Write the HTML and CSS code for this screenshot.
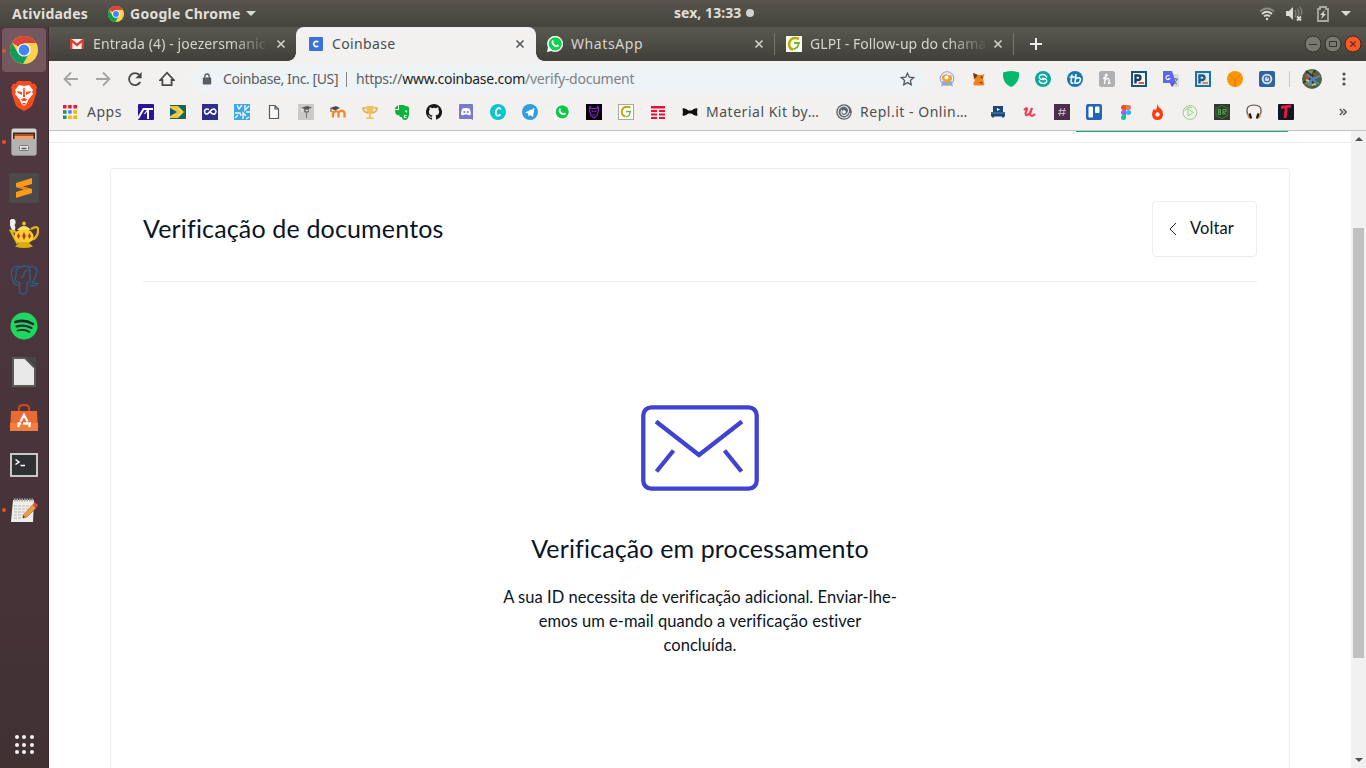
FILE: index.html
```html
<!DOCTYPE html>
<html lang="pt">
<head>
<meta charset="utf-8">
<title>Coinbase</title>
<link rel="stylesheet" href="styles.css">
</head>
<body>
<div class="topbar">
  <div class="tb-left"><span class="t-ativ">Atividades</span>
    <svg class="tb-chrome" width="16" height="16" viewBox="0 0 28 28"><circle cx="14" cy="14" r="14" fill="#fdd04f"/><path d="M14 14 2 6.8A14 14 0 0 1 26.2 7H14z" fill="#dc4437"/><path d="M2 6.8A14 14 0 0 0 13 28l6-10.5L8 17z" fill="#109d58"/><circle cx="14" cy="14" r="6.6" fill="#fff"/><circle cx="14" cy="14" r="5.2" fill="#4285f4"/></svg>
    <span class="t-chrome">Google Chrome</span><i class="caret"></i></div>
  <div class="tb-clock"><span class="t-clock">sex, 13:33</span><i class="dot"></i></div>
  <div class="tb-right">
    <svg width="16" height="16" viewBox="0 0 16 16" fill="none" stroke="#dcdad5" stroke-width="1.8"><path d="M1 5.5Q8-.5 15 5.5" stroke="#8b8984"/><path d="M3 8Q8 3.6 13 8M5 10.4Q8 8 11 10.4"/><circle cx="8" cy="13" r="1.2" fill="#dcdad5" stroke="none"/></svg>
    <svg width="18" height="16" viewBox="0 0 18 16" fill="none"><path d="M1 5h3l4-4v13l-4-4H1z" fill="#dcdad5"/><path d="M10 4q2 3.500 0 7M12.500 2.500q3 5 0 9M15 1q3 5 1 8" stroke="#85837d" stroke-width="1.300"/><path d="m12 10.500 4 4m0-4-4 4" stroke="#dcdad5" stroke-width="1.800"/></svg>
    <svg width="14" height="16" viewBox="0 0 14 16"><path d="M2 3h2V1h6v2h2v12H2z" fill="none" stroke="#aaa8a2" stroke-width="1.800"/><path d="M9 4 4 9h2.500L5 13l5-5H7.500z" fill="#dcdad5"/></svg>
    <i class="caret"></i>
  </div>
</div>
<div class="desktop">
  <div class="dock">
    <div class="app on run"><svg width="28" height="28" viewBox="0 0 28 28"><circle cx="14" cy="14" r="14" fill="#fdd04f"/><path d="M14 14 2 6.800A14 14 0 0 1 26.200 7H14z" fill="#dc4437"/><path d="M2 6.800A14 14 0 0 0 13 28l6-10.500L8 17z" fill="#109d58"/><circle cx="14" cy="14" r="6.600" fill="#fff"/><circle cx="14" cy="14" r="5.400" fill="#4285f4"/></svg></div>
    <div class="app"><svg width="26" height="30" viewBox="0 0 26 30"><path d="M7 0h12l3 3 2-.5 2 4-1 3 .5 2-4 12q-1 3-8.500 6.500Q5.500 26.500 4.500 23.500L.5 11.500l.5-2-1-3 2-4L4 3z" fill="#fb4a1c"/><path d="m8 4 5 1 5-1 4 5-1 2 1 2-5 6-1 3-3 3-3-3-1-3-5-6 1-2-1-2z" fill="#fff"/><path d="m6 10 5 1v3l-4-2zm14 0-5 1v3l4-2zM10 18l3-1 3 1-1 2h-4zM11 22h4l-2 2z" fill="#fb4a1c"/><path d="M12.300 7h1.400l.3 9h-2z" fill="#fb4a1c"/></svg></div>
    <div class="app run"><svg width="26" height="28" viewBox="0 0 26 28"><rect x=".5" y=".5" width="25" height="27" rx="2" fill="#d4d4d4"/><rect x="2" y="4.500" width="22" height="7" fill="#3a2a22"/><path d="M3.500 6h19v2h-19z" fill="#b54e23"/><path d="M3.500 8h19v3h-19z" fill="#f0a163"/><rect x="1" y="11" width="24" height="16" rx="1" fill="#b2b2b2"/><rect x="8.500" y="17.500" width="9" height="5" rx="1" fill="#e8e8e8" stroke="#777"/><path d="M10.500 20.500h5" stroke="#555" stroke-width="1.500"/></svg></div>
    <div class="app"><svg width="30" height="30" viewBox="0 0 30 30"><rect width="30" height="30" rx="2" fill="#4a4a4a"/><path d="m7 10 16-5v6l-9 2.500 9 2.500v4L7 25v-6l8-2.500L7 14z" fill="#fd9a18"/><path d="m7 14 9 3 5-1.500-8-2z" fill="#e58410"/></svg></div>
    <div class="app"><svg width="30" height="30" viewBox="0 0 30 30"><path d="M1 1q4-3 5.500 1 .5 3-1 4 2 3-.5 6-3-1-4-6z" fill="#eee"/><path d="m2 12 4 .5 5 8-3 3zM22 10q8-5 7 3-1 7-8 8" fill="none" stroke="#e5b515" stroke-width="2.300"/><ellipse cx="15" cy="17.500" rx="9.500" ry="7.500" fill="#f3d132"/><path d="M8 11q7-8 14 0z" fill="#f8df66"/><circle cx="15" cy="4.500" r="2" fill="#e7b820"/><path d="M11 23h8l5 4.500q-9 3-18 0z" fill="#dfa90f"/><path d="m9.500 14 1.500 3-1.500 3L8 17zm5.500-1 1.800 4-1.800 4-1.800-4zm5.500 1 1.500 3-1.500 3-1.500-3z" fill="#cc2b1c"/></svg></div>
    <div class="app"><svg width="30" height="30" viewBox="0 0 30 30" fill="none" stroke="#2c5f8c" stroke-width="1.300"><path d="M9 20q-3 2-5.500-6T4 3q4-3 8-1M12 2q8-3 9 3v10q1 2-3 3v7q-.5 4-4 4t-3.500-4v-7l-3-1.500q-2-2-.5-6V6q.5-3 5-4M19 2q9-2 9 5-1 6-5 11l6 .5q-2 3-8 2M15 9q1-5 5-3M12 13q4-2 3-6M9 17l3 1"/></svg></div>
    <div class="app"><svg width="28" height="28" viewBox="0 0 28 28"><circle cx="14" cy="14" r="13.500" fill="#1ed760"/><g fill="none" stroke="#25272b" stroke-linecap="round"><path d="M5.500 10q9-3 17.500 2" stroke-width="2.600"/><path d="M6.500 14.500q8-2.500 15 1.500" stroke-width="2.200"/><path d="M7.500 18.500q7-1.800 12 1.500" stroke-width="1.800"/></g></svg></div>
    <div class="app"><svg width="24" height="30" viewBox="0 0 24 30"><path d="M1 1h12l10 10v18H1z" fill="#e9e9e9" stroke="#5a5a58" stroke-width="2"/><path d="M13 0h11v11z" fill="#454746"/></svg></div>
    <div class="app"><svg width="28" height="30" viewBox="0 0 28 30"><path d="M9 10V5q0-3 5-3t5 3v5" fill="none" stroke="#cf471d" stroke-width="2"/><path d="M1 8h26l1 20H0z" fill="#eb6a32"/><path d="M0 20h28v8H0z" fill="#f27d3c"/><path d="m10.500 18.500 3.500-6.500 3.500 6.500M7.500 20.500h3.500m2 0h8M9 22l-1 2m11-2 1 2" fill="none" stroke="#fff" stroke-width="2.300"/></svg></div>
    <div class="app"><svg class="term" width="28" height="24" viewBox="0 0 28 24"><rect x="1" y="1" width="26" height="22" fill="#2e3131" stroke="#c6c8c7" stroke-width="2"/><path d="m5.500 6.500 3.500 2.500-3.500 2.500M10.500 12.500h4.500" fill="none" stroke="#fff" stroke-width="1.500"/></svg></div>
    <div class="app run"><svg width="28" height="26" viewBox="0 0 28 26"><path d="M3 3h21l-1 22H1z" fill="#eeeeea"/><path d="M4 3h20" stroke="#aaa" stroke-width="3" stroke-dasharray="1.500 1"/><path d="M4 9h17M4 12h16M4 15h12M4 18h10M4 21h8" stroke="#b5b5b2" stroke-dasharray="3 1"/><path d="m13.500 18 9-10 3.500 3-9 9-4 1z" fill="#f09e3d" stroke="#9c5f1f" stroke-width=".6"/><path d="m22.500 8 2-3 3.500 3-2 3z" fill="#e94a4d"/><path d="m12.500 21 1-2.500 1.500 1.500z" fill="#333"/></svg></div>
    <div class="apps-grid"><i></i><i></i><i></i><i></i><i></i><i></i><i></i><i></i><i></i></div>
  </div>
  <div class="window">
    <div class="tabs">
      <div class="tab"><svg class="fav" width="16" height="16" viewBox="0 0 16 16"><path d="M1 3h14v10H1z" fill="#f3f1ee"/><path d="M2.200 13V4.200L8 9l5.800-4.800V13" fill="none" stroke="#df3b32" stroke-width="2.400"/></svg><span class="title fade t1">Entrada (4) - joezersmanic</span><svg class="x" width="10" height="10" viewBox="0 0 10 10"><path d="m1.500 1.500 7 7m0-7-7 7"/></svg></div>
      <div class="tab active"><svg class="fav" width="16" height="16" viewBox="0 0 16 16"><rect x="1" y="1" width="14" height="14" rx="1" fill="#3b72d9"/><path d="M10.300 6.300a2.600 2.600 0 1 0 0 3.400" fill="none" stroke="#fff" stroke-width="1.700"/></svg><span class="title t2">Coinbase</span><svg class="x" width="10" height="10" viewBox="0 0 10 10"><path d="m1.500 1.500 7 7m0-7-7 7"/></svg></div>
      <div class="tab after"><svg class="fav" width="16" height="16" viewBox="0 0 16 16"><path d="m0 16 1-4.500A8 8 0 1 1 4.500 15z" fill="#fff"/><circle cx="8.200" cy="7.800" r="6.600" fill="#0bd14c"/><path d="M5 4.500q1-1 1.800.8l-.4 1.400q1 2 3 2.800l1.200-1q2 .6 1 2-3 2-6-1.600-1.800-2.300-.6-4.400" fill="#fff"/></svg><span class="title t3">WhatsApp</span><svg class="x" width="10" height="10" viewBox="0 0 10 10"><path d="m1.500 1.500 7 7m0-7-7 7"/></svg></div>
      <div class="tab sep"><svg class="fav" width="16" height="16" viewBox="0 0 16 16"><rect width="16" height="16" fill="#fafaf2"/><path d="M13 3Q6 0 3.500 6 2 12.500 7 13.500" fill="none" stroke="#b5ae0b" stroke-width="2.600"/><path d="M8 7h5l-1.500 4-4 2.500" fill="none" stroke="#76b238" stroke-width="1.800"/></svg><span class="title fade t4">GLPI - Follow-up do chama</span><svg class="x" width="10" height="10" viewBox="0 0 10 10"><path d="m1.500 1.500 7 7m0-7-7 7"/></svg></div>
      <div class="newtab"><svg width="12" height="12" viewBox="0 0 12 12"><path d="M6 0v12M0 6h12" stroke="#eeece8" stroke-width="2"/></svg></div>
      <div class="wbtns">
        <svg width="18" height="18" viewBox="0 0 18 18"><circle cx="9" cy="9" r="8" fill="#797871" stroke="#33322d"/><path d="M5 9.500h8" stroke="#33322d"/></svg>
        <svg width="18" height="18" viewBox="0 0 18 18"><circle cx="9" cy="9" r="8" fill="#797871" stroke="#33322d"/><path d="M5.500 6.500h7v5h-7z" fill="none" stroke="#33322d"/></svg>
        <svg width="18" height="18" viewBox="0 0 18 18"><circle cx="9" cy="9" r="8" fill="#f35a26" stroke="#4a2416"/><path d="m6.300 6.300 5.400 5.400m0-5.400-5.400 5.400" stroke="#5c2813" stroke-width="1.200"/></svg>
      </div>
    </div>
    <div class="toolbar">
      <div class="nav">
        <svg width="16" height="16" viewBox="0 0 16 16" stroke="#a5a4a3"><path d="M15 8H2m6-6.500L1.500 8 8 14.500"/></svg>
        <svg width="16" height="16" viewBox="0 0 16 16" stroke="#a5a4a3"><path d="M1 8h13M8 1.500 14.500 8 8 14.500"/></svg>
        <svg width="16" height="16" viewBox="0 0 16 16" stroke="#494949"><path d="M13.300 11A6 6 0 1 1 12.500 4"/><path d="M14.600 1v6.200H8.400z" fill="#494949" stroke="none"/></svg>
        <svg width="16" height="16" viewBox="0 0 16 16" stroke="#494949"><path d="M1.200 9 8 1.700 14.800 9H12.600v5.200H3.400V9z"/></svg>
      </div>
      <div class="omnibox">
        <svg width="10" height="12" viewBox="0 0 10 12"><rect x=".8" y="4.500" width="8.400" height="7" rx=".8" fill="#5a5d61"/><path d="M2.800 5V3.200a2.200 2.200 0 0 1 4.400 0V5" fill="none" stroke="#5a5d61" stroke-width="1.300"/></svg>
        <span class="cert">Coinbase, Inc. [US]</span><i class="bar"></i><span class="url"><span class="sch">https://</span><b>www.coinbase.com</b>/verify-document</span>
        <svg class="star" width="15" height="14" viewBox="0 0 15 14"><path d="m7.500 1.200 1.800 4 4.300.4-3.200 2.900.9 4.300-3.800-2.200-3.800 2.200.9-4.300L1.400 5.600l4.300-.4z" fill="none" stroke="#55585c" stroke-width="1.300"/></svg>
      </div>
      <div class="exts">
        <svg width="16" height="16" viewBox="0 0 16 16"><circle cx="8" cy="7.500" r="6.800" fill="#e8ecf5" stroke="#86a0d2"/><path d="m3.500 10-1.500 5.500 4-1.500h4l4 1.500-1.500-5.500" fill="#91a8d8"/><path d="m3 5 4-2 2 1.500L12.500 4l.5 4.500-3 3H6L3 8z" fill="#e9a238"/><circle cx="7.500" cy="6.500" r="2" fill="#fff"/></svg>
        <svg width="16" height="16" viewBox="0 0 16 16"><path d="m2.500 2 4 2h4l3-1-1.500 5 1.500 5-1 1.500H3.500L2 13l2-4-1.500-2z" fill="#f0831f"/><path d="m2 2 5 2-3.500 4zm7 4 2-1 1 3zM8 11h3v2z" fill="#6e3518"/></svg>
        <svg width="16" height="16" viewBox="0 0 16 16"><path d="M0 1.500q8-3 16 0Q17 12 8 16-1 12 0 1.500" fill="#04b96c"/></svg>
        <svg width="16" height="16" viewBox="0 0 16 16"><circle cx="8" cy="8" r="8" fill="#07a99f"/><path d="M12 6.500Q10.500 3 7 3.500 3.500 4.500 4.500 7 5.500 9 9 8.500M4 9.500q1.500 3.500 5 3 3.500-1 2.500-3.500Q10.500 7 7 7.500" fill="none" stroke="#fff" stroke-width="1.500"/></svg>
        <svg width="16" height="16" viewBox="0 0 16 16"><circle cx="8" cy="8" r="8" fill="#1678b5"/><path d="M5 3.500 4 11q0 1.500 2.500 1M2.500 6H8M9 3 8 12q5 1 5.500-3.500Q13 5.500 9 7.500" fill="none" stroke="#fff" stroke-width="1.600"/></svg>
        <svg width="16" height="16" viewBox="0 0 16 16"><rect width="16" height="16" rx="2.500" fill="#aeb0b2"/><path d="M5.500 13 6.500 4q2-2 1.500.5-1 2.500-4 3M6.200 9q4-3.500 4 .2l-.5 3.300 2-.8" fill="none" stroke="#fff" stroke-width="1.300"/></svg>
        <svg width="16" height="16" viewBox="0 0 16 16"><rect x="1" y="1" width="14" height="14" fill="#fff" stroke="#18557f" stroke-width="2"/><path d="M4.500 12.500V4.500H7q2.500 0 2.500 2.200T7 9H5" fill="none" stroke="#143e63" stroke-width="2.400"/><path d="M7.500 12H13" stroke="#ef4023" stroke-width="1.800"/></svg>
        <svg width="16" height="16" viewBox="0 0 16 16"><path d="M5 3h11v13H8z" fill="#d9dbdc"/><path d="M0 0h9l4 12H0z" fill="#5b68ec"/><path d="M7 12h5l-3 4z" fill="#7144c8"/><path d="M6.500 5.200a2 2 0 1 0 .2 2.500H5" fill="none" stroke="#fff" stroke-width="1.100"/><path d="M10 8h5m-2.500-1v1m1.500 0q-1 4-4 5m0-4q1 3 4 4" fill="none" stroke="#607c86"/></svg>
        <svg width="16" height="16" viewBox="0 0 16 16"><rect x="1" y="1" width="14" height="14" fill="#dceaf2" stroke="#2171a2" stroke-width="2"/><path d="M4.500 12.500V4.500H7q2.500 0 2.500 2.200T7 9H5" fill="none" stroke="#235a87" stroke-width="2.400"/><path d="M7.500 12H13" stroke="#ed7043" stroke-width="1.800"/></svg>
        <svg width="16" height="16" viewBox="0 0 16 16"><circle cx="8" cy="8" r="8" fill="#ff9600"/><path d="m2.500 3.500 5.500 6 5.500-6M8 9.500V16" fill="none" stroke="#d57905"/></svg>
        <svg width="16" height="16" viewBox="0 0 16 16"><rect width="16" height="16" rx="2" fill="#31629f"/><circle cx="8" cy="8" r="5.300" fill="#d7e4f2"/><circle cx="8" cy="8" r="2.800" fill="none" stroke="#3768a5" stroke-width="1.200"/><path d="m8 8 2-3" stroke="#3768a5"/></svg>
      </div>
      <i class="tsep"></i>
      <svg class="avatar" width="20" height="20" viewBox="0 0 20 20"><circle cx="10" cy="10" r="10" fill="#55643f"/><path d="m4 2 6 5 3-6M1 14l8-5 3 9" fill="#7c8a5c" stroke="#293924" stroke-width="2"/><path d="m5 5 6 5 7-3M10 10l-3 7m4-6 6 4" fill="none" stroke="#4f86c4" stroke-width="2"/><path d="m3 6 4 4m4-6 3 2" stroke="#c04632" stroke-width="2"/><path d="m10 16 4-1m-10-4 3 1" stroke="#b8c1a3" stroke-width="2"/></svg>
      <svg class="kebab" width="4" height="14" viewBox="0 0 4 14" fill="#505050"><circle cx="2" cy="2" r="1.600"/><circle cx="2" cy="7" r="1.600"/><circle cx="2" cy="12" r="1.600"/></svg>
    </div>
    <div class="bookmarks">
      <div class="bm apps"><svg width="14" height="14" viewBox="0 0 14 14"><path d="M0 0h3.500v3.500H0zM5.200 0h3.500v3.500H5.200zM10.400 0H14v3.500h-3.600z" fill="#f11534"/><path d="M0 5.200h3.500v3.500H0zM0 10.400h3.500V14H0z" fill="#0d9c5a"/><path d="M5.200 5.200h3.500v3.500H5.200z" fill="#4285f4"/><path d="M10.400 5.200H14v3.500h-3.600zM5.200 10.400h3.500V14H5.200zM10.400 10.400H14V14h-3.600z" fill="#f4b400"/></svg><span>Apps</span></div>
      <div class="bm"><svg width="16" height="16" viewBox="0 0 16 16"><rect width="16" height="16" rx="1" fill="#2d139a"/><path d="M0 14.500 5.500 5H15M10 4v11" fill="none" stroke="#fff" stroke-width="2"/><path d="m6.500 10 3-4" stroke="#fff" stroke-width="1.200"/></svg></div>
      <div class="bm"><svg width="16" height="16" viewBox="0 0 16 16"><path d="M0 1h16v14H0z" fill="#16694d"/><path d="M0 2h8l6 6-6 6H0z" fill="#eac641"/><path d="m0 4 7 4-7 4z" fill="#11537b"/><path d="m8 4 4.500 4L8 12" fill="none" stroke="#f7e5a0"/></svg></div>
      <div class="bm"><svg width="16" height="16" viewBox="0 0 16 16"><rect width="16" height="16" fill="#302e8b"/><path d="M7 5.500Q3 4 2.500 7.500 3 11 6 9.500l4-4q3-1.500 4 2-.5 4-4 2L7.500 7.500" fill="none" stroke="#fff" stroke-width="1.600"/></svg></div>
      <div class="bm"><svg width="16" height="16" viewBox="0 0 16 16"><rect width="16" height="16" fill="#39a8e3"/><path d="m3 1 2 4 3-4M11 1v5l4-4M1 9h5l1 3M1 14l3-3m5 4V9l3 3m0-4h4m-4 7 3-2" fill="none" stroke="#f2fafd" stroke-width="1.400"/></svg></div>
      <div class="bm"><svg width="16" height="16" viewBox="0 0 16 16"><path d="M3.500 1.500H9L12.500 5v9.500h-9zM9 1.500V5h3.500" fill="#fafafa" stroke="#56585a" stroke-width="1.200"/></svg></div>
      <div class="bm"><svg width="16" height="16" viewBox="0 0 16 16"><rect width="16" height="16" fill="#c9c9c7"/><path d="m3 4 6-2 5 1.500-5 2z" fill="#555"/><path d="M6 5h5v3l-2 1v5H8V9L6 8z" fill="#777"/><path d="M8 6.500h2M4 4.500V8" stroke="#eee"/></svg></div>
      <div class="bm"><svg width="16" height="16" viewBox="0 0 16 16"><path d="M3 13.500V7m0 2.500Q6.500 5 8.500 9v4.500m0-5Q12 5 14.500 8.500v5" fill="none" stroke="#f08a24" stroke-width="2.300"/><path d="m0 4 6-2 4 2-5 2.500z" fill="#4e4b49"/><path d="M1 4v4" stroke="#4e4b49"/></svg></div>
      <div class="bm"><svg width="16" height="16" viewBox="0 0 16 16"><path d="M4 2h8l-1 6-2 2v3l3 1v1H4v-1l3-1v-3L5 8z" fill="#ecc25a"/><path d="M4 4H1q0 4 5 5m6-5h3q0 4-5 5" fill="none" stroke="#e0ae55" stroke-width="1.700"/></svg></div>
      <div class="bm"><svg width="16" height="16" viewBox="0 0 16 16"><path d="M5 1h5l1 1q4 0 4 2v7q-1 5-4 5-3 0-3-3H6l-1-2Q1 12 1 6h4z" fill="#08b43c"/><path d="M1 5V4l3-3v4z" fill="#08b43c"/><path d="M11 7h1.500v1.500M12.500 11.500h-2v2h2" fill="none" stroke="#eef6ef" stroke-width="1.200"/></svg></div>
      <div class="bm"><svg width="16" height="16" viewBox="0 0 16 16"><path d="M8 0C3.580 0 0 3.580 0 8c0 3.540 2.290 6.530 5.470 7.590.4.070.55-.17.55-.38 0-.19-.01-.82-.01-1.490-2.010.37-2.530-.49-2.690-.94-.09-.23-.48-.94-.82-1.130-.28-.15-.68-.52-.01-.53.63-.01 1.080.58 1.230.82.72 1.210 1.870.87 2.330.66.07-.52.28-.87.51-1.070-1.780-.2-3.640-.89-3.640-3.950 0-.87.31-1.590.82-2.150-.08-.2-.36-1.020.08-2.120 0 0 .67-.21 2.200.82a7.600 7.600 0 0 1 4 0c1.530-1.040 2.200-.82 2.200-.82.44 1.100.16 1.920.08 2.120.51.560.82 1.270.82 2.150 0 3.070-1.870 3.750-3.650 3.950.29.250.54.730.54 1.480 0 1.070-.01 1.930-.01 2.200 0 .21.150.46.55.38A8 8 0 0 0 8 0z" fill="#191717"/></svg></div>
      <div class="bm"><svg width="16" height="16" viewBox="0 0 16 16"><path d="M2 0h12q1 0 1 1v15l-2-1H2q-1 0-1-1V1q0-1 1-1" fill="#7c78d0"/><path d="M3 10.500Q3 6.500 4.500 4.500q3.500-1 7 0Q13 7 13 10.500l-2 1-1-1H6l-1 1z" fill="#fff"/><circle cx="6.300" cy="8" r="1" fill="#7c78d0"/><circle cx="9.700" cy="8" r="1" fill="#7c78d0"/></svg></div>
      <div class="bm"><svg width="16" height="16" viewBox="0 0 16 16"><circle cx="8" cy="8" r="8" fill="#07c6cd"/><path d="M10.500 5.500Q10 3 7.500 4.500 5 7 6 10.500q2 2.500 4.500-.2" fill="none" stroke="#fff" stroke-width="1.700"/></svg></div>
      <div class="bm"><svg width="16" height="16" viewBox="0 0 16 16"><circle cx="8" cy="8" r="8" fill="#2f9ee1"/><path d="M3 8.500 12.500 4 11 13 8 11l-1.500 1.500L6 9.500z" fill="#fff"/></svg></div>
      <div class="bm"><svg width="16" height="16" viewBox="0 0 16 16"><path d="m0 16 1-4.500A8 8 0 1 1 4.500 15z" fill="#fff"/><circle cx="8.200" cy="7.800" r="6.600" fill="#0bc946"/><path d="M5 4.500q1-1 1.800.8l-.4 1.400q1 2 3 2.800l1.200-1q2 .6 1 2-3 2-6-1.600-1.800-2.300-.6-4.400" fill="#fff"/></svg></div>
      <div class="bm"><svg width="16" height="16" viewBox="0 0 16 16"><rect width="16" height="16" fill="#07000c"/><path d="m4 2 1 2.500h6L12 2l.5 5-1.500 4.500L8 14l-3-2.500L3.500 7zM5.500 6.500 7.500 8m3-1.500L8.500 8M6.500 11h3" fill="none" stroke="#8126bc" stroke-width="1.200"/></svg></div>
      <div class="bm"><svg width="16" height="16" viewBox="0 0 16 16"><rect x=".5" y=".5" width="15" height="15" fill="#fff" stroke="#a8a99b"/><path d="M12.500 3.500Q6 1 4 6q-1 5.500 3.500 6.500" fill="none" stroke="#b5ae1d" stroke-width="2"/><path d="M8 7.500h4.500l-1.500 4-3 1.500" fill="none" stroke="#76b238" stroke-width="1.300"/></svg></div>
      <div class="bm"><svg width="16" height="16" viewBox="0 0 16 16"><path d="M1 2h14v2.500H1zM1 6h6v2H1zm8 0h6v2H9zM1 9.500h6v2H1zm8 0h6v2H9zM1 13h6v2H1zm8 0h6v2H9z" fill="#f60c31"/></svg></div>
      <div class="bm wide"><svg width="16" height="16" viewBox="0 0 16 16"><path d="M.5 4.500q2-1 6 2h3q4-3 6-2-.8 3.500 0 7-2 1-6-2h-3q-4 3-6 2 .8-3.500 0-7" fill="#111"/></svg><span>Material Kit by…</span></div>
      <div class="bm wide"><svg width="16" height="16" viewBox="0 0 16 16"><circle cx="8" cy="8" r="7.800" fill="#5b6770"/><path d="M14 9A6 6 0 1 1 8 2q5 1 4.500 5.500Q11 12 7 11.500 3.500 9 6 5.800" fill="none" stroke="#e8e8e8" stroke-width="1.100"/><circle cx="8" cy="8" r="1.800" fill="#fff"/></svg><span>Repl.it - Onlin…</span></div>
      <div class="bm"><svg width="16" height="16" viewBox="0 0 16 16"><path d="M3 2h10v7H3zM1 8h14v4.500H1zM2 12h2v1.500H2zm10 0h2v1.500h-2z" fill="#17477b"/><path d="m7 4 3 1.500L7 7z" fill="#fff"/><path d="M1 9h14" stroke="#7fa5c7" stroke-width=".7"/></svg></div>
      <div class="bm"><svg width="16" height="16" viewBox="0 0 16 16"><path d="M2 6q3-3 3-1L3.500 9.500Q4 13 8 9l2-5-2 6q1 4 5 0" fill="none" stroke="#ec4257" stroke-width="2.200"/></svg></div>
      <div class="bm"><svg width="16" height="16" viewBox="0 0 16 16"><rect width="16" height="16" fill="#4b2e49"/><path d="M7 4 5.500 12M10.500 4 9 12M4.500 6.500H12M4 9.500h7.500" stroke="#c6b5c5" fill="none"/></svg></div>
      <div class="bm"><svg width="16" height="16" viewBox="0 0 16 16"><rect width="16" height="16" rx="2" fill="#2267b7"/><rect x="2.500" y="2.500" width="4.500" height="11" rx="1" fill="#fff"/><rect x="9" y="2.500" width="4.500" height="6.500" rx="1" fill="#fff"/></svg></div>
      <div class="bm"><svg width="16" height="16" viewBox="0 0 16 16"><path d="M8 1H5.500a2.500 2.500 0 0 0 0 5H8z" fill="#f24e1e"/><path d="M8 1h2.500a2.500 2.500 0 0 1 0 5H8z" fill="#ff7262"/><path d="M8 6H5.500a2.500 2.500 0 0 0 0 5H8z" fill="#a259ff"/><circle cx="10.500" cy="8.500" r="2.500" fill="#1abcfe"/><path d="M8 11H5.500A2.500 2.500 0 1 0 8 13.500z" fill="#0acf83"/></svg></div>
      <div class="bm"><svg width="16" height="16" viewBox="0 0 16 16"><path d="M7.500 0q.5 3 3 4.500Q13 6.500 13 10.500 12.500 16 7.500 16T2 10.500Q2 7 4 4.500L5 6.500Q7.500 4 7.500 0z" fill="#ff3a10"/><circle cx="7.500" cy="10.500" r="2.200" fill="#f2f0ef"/></svg></div>
      <div class="bm"><svg width="16" height="16" viewBox="0 0 16 16" fill="none" stroke="#96ce85"><circle cx="8" cy="8.500" r="6.900"/><path d="M6 5v7l5.500-3.500z"/><path d="M3 7a5 5 0 0 1 7-3"/></svg></div>
      <div class="bm"><svg width="16" height="16" viewBox="0 0 16 16"><rect width="16" height="16" fill="#33392f"/><path d="m8 1.500 6 3v7l-6 3-6-3v-7z" fill="none" stroke="#37793a"/><path d="M4.500 5.500h2v5h-2zM4.500 8h2m2.500 3V5.500h3V8H9l3 3" fill="none" stroke="#50ae4d"/></svg></div>
      <div class="bm"><svg width="16" height="16" viewBox="0 0 16 16"><path d="M1.500 10Q-1 1 8 1t6.500 9" fill="none" stroke="#65483c" stroke-width="1.200"/><path d="m3.500 9.500 1.500 5M12.500 9.500l-1.500 5" stroke="#191919" stroke-width="2.500"/><path d="m1.500 10 1.500 4m11.500-4L13 14" stroke="#ec8b29" stroke-width="1.500"/></svg></div>
      <div class="bm"><svg width="16" height="16" viewBox="0 0 16 16"><rect width="16" height="16" rx="1" fill="#101820"/><path d="M3 3.500 13 2M8.500 3 7 14" stroke="#f11342" stroke-width="2.800"/></svg></div>
      <svg class="more" width="8" height="8" viewBox="0 0 8 8"><path d="m.8 1 3 3-3 3M4.300 1l3 3-3 3" fill="none" stroke="#4c4c4c" stroke-width="1.300"/></svg>
    </div>
    <div class="page">
      <main class="site">
        <div class="sitehead"><i class="green"></i></div>
        <section class="card">
          <header><h1>Verificação de documentos</h1><a class="back"><svg width="8" height="14" viewBox="0 0 8 14"><path d="M7 1 1 7l6 6" fill="none" stroke="#25282c"/></svg><span>Voltar</span></a></header>
          <div class="status">
            <svg width="118" height="86" viewBox="0 0 118 86" fill="none" stroke="#4042d0" stroke-width="4.300"><rect x="2.300" y="2.300" width="113.400" height="81.400" rx="8"/><path d="m15 16.500 43 33.500 43-33.500M15.500 66.500l17-21M100.500 66.500l-17-21"/></svg>
            <h2>Verificação em processamento</h2>
            <p><span class="p1">A sua ID necessita de verificação adicional. Enviar-lhe-</span><br><span class="p2">emos um e-mail quando a verificação estiver</span><br><span class="p3">concluída.</span></p>
          </div>
        </section>
      </main>
      <div class="scroll"><i class="up"></i><i class="thumb"></i><i class="down"></i></div>
    </div>
  </div>
</div>
</body>
</html>
```
FILE: styles.css
```css
* { box-sizing: border-box; }
body { margin: 0; width: 1366px; height: 768px; overflow: hidden; font-family: "Noto Sans", sans-serif; font-size: 14px; background: #fff; }
svg { display: block; flex: none; }
i { display: block; flex: none; }
span { white-space: nowrap; }

.topbar { height: 27px; background: linear-gradient(#57554d, #44433d); display: grid; grid-template-columns: 1fr 90px 1fr; color: #e2dfd9; font-weight: 700; line-height: 26px; }
.tb-left, .tb-clock, .tb-right { display: flex; align-items: center; }
.tb-left { padding-left: 12px; }
.t-ativ { width: 96px; letter-spacing: 0.25px; }
.t-chrome { width: 116px; margin-left: 6px; letter-spacing: 0.25px; }
.caret { width: 0; height: 0; border: 5px solid transparent; border-top-color: #dcdad5; border-bottom: 0; }
.tb-clock { gap: 4px; width: 120px; padding-left: 36px; line-height: 24px; padding-bottom: 2px; }
.t-clock { width: 68px; letter-spacing: 0.05px; }
.dot { width: 8px; height: 8px; border-radius: 50%; background: #d4d2cd; }
.tb-right { justify-content: flex-end; padding-right: 15px; }
.tb-right svg { margin-right: 13px; }
.tb-right svg:nth-child(1) { margin-right: 10px; }
.tb-right svg:nth-child(3) { margin-right: 11px; }

.desktop { display: flex; height: 741px; }
.dock { width: 49px; display: flex; flex-direction: column; background: linear-gradient(#523840, #48343a 60%, #403133); border-right: 1px solid #3c2c31; }
.app { height: 46px; display: grid; place-items: center; position: relative; }
.app.on { width: 44px; height: 44px; margin: 1px 2px; border-radius: 4px; background: #73595f; }
.app.run::before { content: ""; position: absolute; left: 2px; top: 21px; width: 4px; height: 4px; border-radius: 50%; background: #e95420; }
.app.on.run::before { left: 0; }
.term { margin-top: 2px; }
.apps-grid { margin: auto auto 14px; display: grid; grid-template-columns: repeat(3, 4px); gap: 3.500px; }
.apps-grid i { width: 4px; height: 4px; border-radius: 50%; background: #f4f2f2; }

.window { width: 1317px; display: flex; flex-direction: column; }
.tabs { height: 34px; display: flex; padding-left: 8px; background: linear-gradient(#595850, #403f3a); color: #d6d4cd; }
.tab { width: 239px; padding: 0 10px 0 12px; display: flex; align-items: center; position: relative; }
.fav { margin-right: 8px; }
.title { width: 176px; overflow: hidden; line-height: 22px; }
.fade { -webkit-mask-image: linear-gradient(90deg, #000 138px, transparent 178px); mask-image: linear-gradient(90deg, #000 138px, transparent 178px); }
.tab .x { margin-left: 7px; fill: none; stroke: #d3d1ca; stroke-width: 1.600; }
.active { background: #f2f1f0; color: #4a4d50; border-radius: 8px 8px 0 0; width: 240px; margin-right: -1px; z-index: 1; }
.active::before, .active::after { content: ""; position: absolute; bottom: 0; width: 8px; height: 8px; background: radial-gradient(circle at 0 0, transparent 7.500px, #f2f1f0 8px); left: -8px; }
.active::after { left: auto; right: -8px; background: radial-gradient(circle at 100% 0, transparent 7.500px, #f2f1f0 8px); }
.active .x { stroke: #55585a; }
.sep { border: solid #706f68; border-width: 0 1px; border-image: linear-gradient(transparent 7px, #77766f 7px, #77766f 27px, transparent 27px) 1; padding-left: 11px; width: 240px; }
.newtab { margin: 11px 0 0 16px; }
.wbtns { display: flex; gap: 2px; margin: 8px 4px 0 auto; }
.t1 { letter-spacing: 0.1px; }
.t2 { letter-spacing: 0.35px; }
.t3 { letter-spacing: 0.6px; }
.t4 { letter-spacing: 0.05px; }

.toolbar { height: 36px; background: #f2f1f0; display: flex; align-items: center; padding-left: 14px; }
.nav { display: flex; gap: 16px; fill: none; stroke-width: 1.800; }
.omnibox { margin-left: 16px; width: 732px; height: 28px; border-radius: 14px; background: #eef3f5; display: flex; align-items: center; padding: 0 8px 0 11px; color: #5b5e62; }
.cert { margin: -2px 0 0 11px; width: 123px; letter-spacing: -0.4px; }
.bar { width: 1px; height: 15px; background: #85888b; }
.url { margin: -2px 0 0 9px; color: #7f8285; letter-spacing: -0.25px; }
.sch { color: #5d6063; }
.url b { color: #1e1f21; font-weight: 400; }
.star { margin-left: auto; }
.exts { display: flex; gap: 16px; margin-left: 16px; }
.tsep { width: 1px; height: 16px; background: #c9c8c7; margin: 0 12px 0 14px; }
.kebab { margin-left: 20px; }

.bookmarks { height: 34px; background: #f2f1f0; border-bottom: 1px solid #c4c3c2; padding: 0 19px 3px 14px; display: flex; align-items: center; color: #4e4f51; }
.bm { width: 32px; display: flex; align-items: center; gap: 8px; flex: none; }
.bm span { margin-top: -2px; letter-spacing: 0.52px; }
.bm.apps { width: 75px; gap: 10px; }
.bm.wide { width: 154px; }
.more { margin-left: auto; }

.page { height: 637px; display: flex; background: #fff; font-family: Lato, sans-serif; color: #0a1424; }
.site { width: 1302px; height: 637px; overflow: hidden; }
.sitehead { height: 12px; border-bottom: 1px solid #ececec; }
.green { width: 212px; height: 1px; margin-left: 1027px; background: #12b273; }
.card { width: 1180px; height: 700px; margin: 25px 0 0 61px; border: 1px solid #ececec; border-radius: 4px; padding: 32px; }
.card header { height: 81px; display: flex; justify-content: space-between; border-bottom: 1px solid #ececec; }
h1, h2 { margin: 0; font-weight: 400; font-size: 25px; line-height: 32px; white-space: nowrap; }
h1 { margin-top: 11px; letter-spacing: 0.16px; }
.back { width: 105px; height: 56px; border: 1px solid #ececec; border-radius: 4px; display: flex; align-items: center; padding-left: 16px; gap: 13px; font-size: 16.500px; }
.back span { margin-top: -2px; letter-spacing: 0.1px; }
.status { display: flex; flex-direction: column; align-items: center; padding-top: 123px; }
h2 { margin-top: 41px; letter-spacing: 0.13px; }
p { margin: 21px 0 0; width: 400px; text-align: center; font-size: 16.500px; letter-spacing: 0.05px; line-height: 24px; }
.scroll { width: 15px; height: 637px; background: #f1f1f1; display: flex; flex-direction: column; align-items: center; }
.up { border: 4px solid transparent; border-bottom-color: #505050; border-top: 0; margin-top: 6px; }
.thumb { width: 11px; height: 430px; margin-top: 87px; background: #c1c1c1; }
.down { border: 4px solid transparent; border-top-color: #505050; border-bottom: 0; margin: auto 0 6px; }
```
